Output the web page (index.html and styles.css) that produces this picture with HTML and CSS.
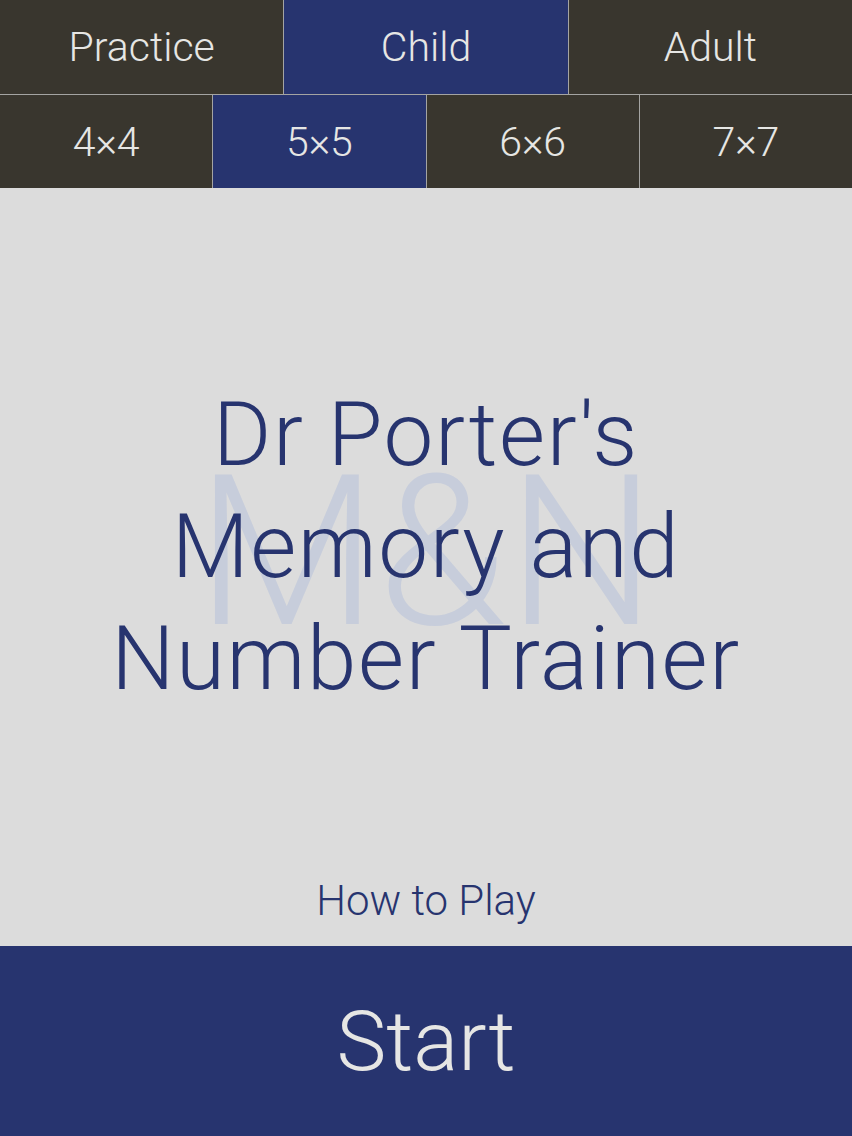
FILE: index.html
```html
<!DOCTYPE html>
<html lang="en">
<head>
    <meta charset="UTF-8">
    <title>Memory and Number Trainer</title>
    <link rel="stylesheet" href="styles.css">
</head>
<body>
<header>
    <nav class="tabs modes">
        <button class="tab">Practice</button>
        <button class="tab active">Child</button>
        <button class="tab">Adult</button>
    </nav>
    <nav class="tabs sizes">
        <button class="tab">4×4</button>
        <button class="tab active">5×5</button>
        <button class="tab">6×6</button>
        <button class="tab">7×7</button>
    </nav>
</header>

<main>
    <div class="title">
        <span class="watermark">M&amp;N</span>
        <h1>Dr Porter's<br>Memory and<br>Number Trainer</h1>
    </div>
    <a class="how-to" href="#">How to Play</a>
</main>

<button class="start-button">Start</button>
</body>
</html>
```

FILE: styles.css
```css
body {
    margin: 0;
    padding: 0;
    height: 1136px;
    display: flex;
    flex-direction: column;
    background-color: #dcdcdc;
    font-family: Roboto, "Helvetica Neue", Arial, sans-serif;
    font-weight: 300;
    overflow: hidden;
}

header {
    background-color: #a4a4a2;
    display: flex;
    flex-direction: column;
    gap: 1px;
}

.tabs {
    display: grid;
    gap: 1px;
}

.modes {
    grid-template-columns: repeat(3, 1fr);
    height: 94px;
}

.sizes {
    grid-template-columns: repeat(4, 1fr);
    height: 93px;
}

.tab {
    border: none;
    margin: 0;
    padding: 0;
    background-color: #39362e;
    color: #e6e6e4;
    font-family: inherit;
    font-weight: 300;
    font-size: 41px;
    cursor: pointer;
}

.tab.active {
    background-color: #27346f;
}

main {
    flex-grow: 1;
    display: flex;
    flex-direction: column;
    align-items: center;
}

.title {
    position: relative;
    margin-top: 191px;
    text-align: center;
}

.title h1 {
    position: relative;
    margin: 0;
    font-weight: 300;
    font-size: 89px;
    line-height: 112px;
    letter-spacing: 1.6px;
    color: #27346f;
}

/* big faded monogram behind the title */
.watermark {
    position: absolute;
    left: 50%;
    top: 68px;
    transform: translateX(-50%);
    font-size: 210px;
    font-weight: 300;
    line-height: 1;
    color: #c7cddb;
    white-space: nowrap;
}

.how-to {
    margin-top: auto;
    margin-bottom: 20px;
    font-size: 42px;
    line-height: 50px;
    color: #27346f;
    text-decoration: none;
}

.start-button {
    height: 190px;
    border: none;
    margin: 0;
    background-color: #27346f;
    color: #e6e6e4;
    font-family: inherit;
    font-weight: 300;
    font-size: 84px;
    cursor: pointer;
}
```
